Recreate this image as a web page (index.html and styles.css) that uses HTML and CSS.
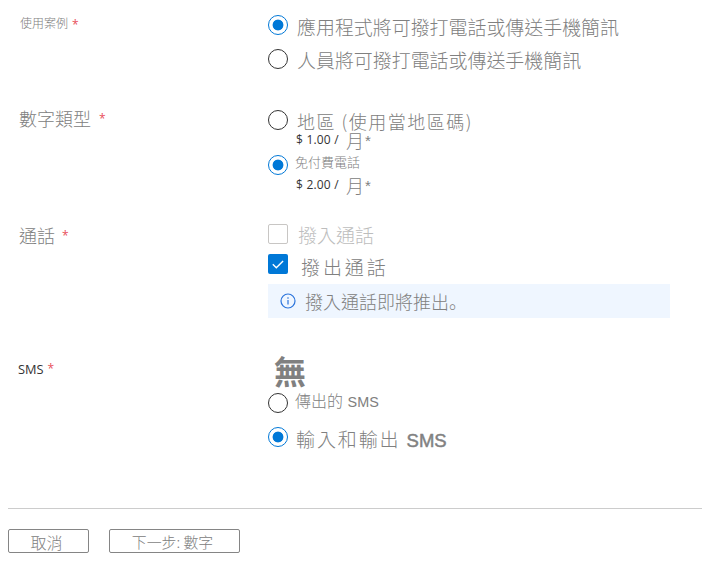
FILE: index.html
```html
<!DOCTYPE html>
<html lang="zh-Hant">
<head>
<meta charset="utf-8">
<title>電話號碼</title>
<link rel="stylesheet" href="styles.css">
</head>
<body>
<form class="form">
  <section class="group use-case">
    <div class="label"><span class="name">使用案例</span><span class="req">*</span></div>
    <div class="options">
      <label class="option"><span class="radio on"></span><span class="text app">應用程式將可撥打電話或傳送手機簡訊</span></label>
      <label class="option"><span class="radio"></span><span class="text person">人員將可撥打電話或傳送手機簡訊</span></label>
    </div>
  </section>
  <section class="group number-type">
    <div class="label"><span class="name">數字類型</span><span class="req">*</span></div>
    <div class="options">
      <label class="option"><span class="radio"></span><span class="text local">地區 (使用當地區碼)</span></label>
      <div class="price"><span class="amount">$ 1.00 /</span><span class="month">月</span><span class="note">*</span></div>
      <label class="option"><span class="radio on"></span><span class="text toll-free">免付費電話</span></label>
      <div class="price second"><span class="amount">$ 2.00 /</span><span class="month">月</span><span class="note">*</span></div>
    </div>
  </section>
  <section class="group calling">
    <div class="label"><span class="name">通話</span><span class="req">*</span></div>
    <div class="options">
      <label class="option"><span class="check disabled"></span><span class="text inbound">撥入通話</span></label>
      <label class="option"><span class="check checked"><svg width="20" height="20" viewBox="0 0 20 20"><path d="M4.8 10.3l3.5 3.4 6.8-6.8" fill="none" stroke="#fff" stroke-width="1.4"/></svg></span><span class="text outbound">撥出通話</span></label>
      <div class="info">
        <svg width="16" height="16" viewBox="0 0 16 16"><circle cx="8" cy="8" r="7" fill="none" stroke="#2b74dc" stroke-width="1.2"/><path d="M8 7v4.5M8 4.3v1.4" stroke="#2b74dc" stroke-width="1.2"/></svg>
        <span class="text message">撥入通話即將推出<span class="stop" lang="zh-Hans">。</span></span>
      </div>
    </div>
  </section>
  <section class="group sms">
    <div class="label"><span class="name">SMS</span><span class="req">*</span></div>
    <div class="options">
      <div class="none">無</div>
      <label class="option"><span class="radio"></span><span class="text out">傳出的 <span class="latin">SMS</span></span></label>
      <label class="option"><span class="radio on"></span><span class="text both">輸入和輸出 <span class="latin">SMS</span></span></label>
    </div>
  </section>
  <footer class="actions">
    <button type="button" class="cancel">取消</button>
    <button type="button" class="next">下一步: 數字</button>
  </footer>
</form>
</body>
</html>
```
FILE: styles.css
```css
* { box-sizing: border-box; }
body {
  margin: 0;
  background: #fff;
  color: #808080;
  font-family: "Noto Sans CJK TC", sans-serif;
  font-weight: 300;
  overflow: hidden;
}
.group { display: grid; grid-template-columns: 268px 1fr; }
.use-case { height: 104px; padding-top: 14px; }
.number-type { height: 116px; padding-top: 5px; }
.calling { height: 130px; padding-top: 4px; }
.sms { height: 158px; }

.label { display: flex; align-items: center; height: 20px; padding-left: 19px; line-height: 20px; white-space: nowrap; }
.name { font-size: 18px; }
.req { margin-left: 8px; color: #e8505b; font: 12px/20px "Open Sans", sans-serif; }
.use-case .label { padding-left: 20px; margin-top: -1px; }
.use-case .name { font-size: 12px; }
.use-case .req { margin-left: 4px; padding-top: 3px; }
.number-type .label { margin-top: -1px; }
.number-type .req { padding-top: 2px; }
.calling .label { margin-top: 1px; }
.calling .req { margin-left: 7px; padding-top: 2px; }
.sms .label { margin-top: 9px; padding-left: 18px; }
.sms .name { color: #333; font: 400 12.8px/20px "Open Sans", sans-serif; }
.sms .req { margin-left: 4px; }

.option { display: flex; align-items: center; height: 20px; }
.text { line-height: 20px; font-size: 19px; white-space: nowrap; }
.radio {
  flex: none;
  width: 20px;
  height: 20px;
  border: 1px solid #333;
  border-radius: 50%;
}
.radio.on { border-color: #0078d7; background: radial-gradient(circle, #0078d7 5px, transparent 5.8px); }
.use-case .options { padding-top: 1px; }
.use-case .option + .option { margin-top: 14px; }
.app { margin: 4px 0 0 9px; font-size: 18.95px; }
.person { margin: 2px 0 0 9px; font-size: 18.95px; }

.local { margin: 1px 0 0 9px; font-size: 18px; line-height: 18px; letter-spacing: 1.5px; }
.number-type .options { padding-top: 1px; }
.price { display: flex; height: 25px; padding-left: 28px; line-height: 20px; }
.amount { width: 50px; color: #333; font: 12px/20px "Open Sans", sans-serif; letter-spacing: 0.2px; }
.month { font-size: 18px; line-height: 20px; }
.note { font: 15px/20px "Liberation Sans", sans-serif; margin: 1px 0 0 1px; }
.toll-free { margin: -6px 0 0 7px; font-size: 13px; }

.inbound { margin: 2px 0 0 10px; color: #bdbdbd; }
.outbound { margin: 5px 0 0 13px; letter-spacing: 2.9px; }
.calling .option + .option { margin-top: 10px; }
.check { flex: none; width: 20px; height: 20px; border-radius: 2px; }
.check svg { display: block; }
.disabled { border: 1px solid #c8c6c4; }
.checked { background: #0078d7; }
.info { display: flex; align-items: center; width: 402px; height: 34px; margin-top: 10px; padding-left: 12px; background: #eff6ff; }
.info svg { margin-top: -1px; }
.message { margin: -1px 0 0 9px; font-size: 18px; }
.stop { font-family: "Noto Sans CJK SC", sans-serif; }

.none { height: 43px; padding-left: 6px; font-size: 32px; font-weight: 700; line-height: 40px; }
.out { margin: -5px 0 0 7px; font-size: 16px; }
.latin { font-family: "Liberation Sans", sans-serif; }
.out .latin { margin-left: 1px; font-size: 14.4px; }
.sms .option + .option { margin-top: 14px; }
.both { margin: 5px 0 0 8px; font-size: 19px; letter-spacing: 1.9px; }
.both .latin { font-size: 18.5px; letter-spacing: 0; -webkit-text-stroke: 0.5px #858585; }

.actions { display: flex; gap: 20px; margin-left: 8px; padding-top: 20px; border-top: 1px solid #ccc; }
button {
  height: 24px;
  padding: 1px 4px 0 0;
  border: 1px solid #858585;
  border-radius: 2px;
  background: #fff;
  color: #808080;
  font-family: "Noto Sans CJK TC", sans-serif;
  font-weight: 300;
  line-height: 20px;
}
.cancel { width: 81px; font-size: 16px; }
.next { width: 131px; font-size: 14.9px; }
```
